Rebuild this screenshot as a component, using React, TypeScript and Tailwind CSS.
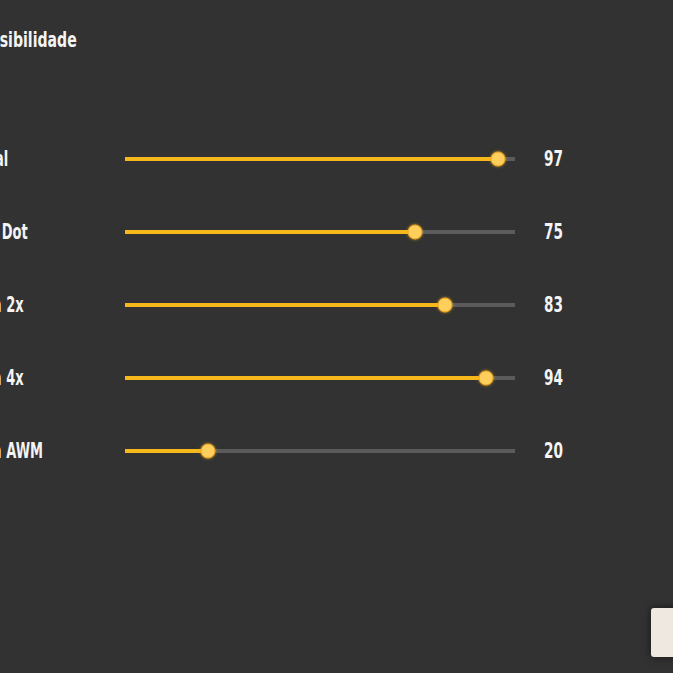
import React from "react";

const rows = [
  { label: "Geral", value: 97 },
  { label: "Red Dot", value: 75 },
  { label: "Mira 2x", value: 83 },
  { label: "Mira 4x", value: 94 },
  { label: "Mira AWM", value: 20 },
];

const font = { fontFamily: '"DejaVu Sans", "Liberation Sans", sans-serif' };

function Txt({ children, className }: { children: React.ReactNode; className?: string }) {
  return (
    <span className={`inline-block origin-left whitespace-nowrap font-bold ${className ?? ""}`}>
      {children}
    </span>
  );
}

export default function App() {
  return (
    <div className="relative w-[673px] h-[673px] overflow-hidden bg-[#323232] text-[#f4f4f4]" style={font}>
      <div className="ml-[-31px] pt-[26px] flex flex-col">
        <div className="h-[28px] text-[22px] leading-[28px] ml-[1px]">
          <Txt className="scale-x-[0.64]">Sensibilidade</Txt>
        </div>
        <div className="mt-[95px] flex flex-col gap-[53px]">
          {rows.map((r) => (
            <div key={r.label} className="flex items-center h-[20px]">
              <div className="w-[156px] text-[21px] leading-[20px]">
                <Txt className="scale-x-[0.62]">{r.label}</Txt>
              </div>
              <div className="relative w-[390px] h-[4px] bg-[#5b5b5b]">
                <div className="h-full bg-[#f6b81b]" style={{ width: `${7 + (r.value / 100) * 376}px` }} />
                <div
                  className="absolute top-1/2 w-[15px] h-[15px] -translate-x-1/2 -translate-y-1/2 rounded-full bg-[#ffcf5e] border border-[#f0a51c] shadow-[0_0_3px_rgba(255,190,40,0.7)]"
                  style={{ left: `${8 + (r.value / 100) * 376}px` }}
                />
              </div>
              <div className="ml-[29px] text-[22px] leading-[20px]">
                <Txt className="scale-x-[0.62]">{r.value}</Txt>
              </div>
            </div>
          ))}
        </div>
      </div>
      <div className="absolute left-[651px] top-[608px] w-[60px] h-[49px] rounded-[3px] bg-[#efe8e0] shadow-[0_0_8px_rgba(0,0,0,0.6)]" />
    </div>
  );
}
